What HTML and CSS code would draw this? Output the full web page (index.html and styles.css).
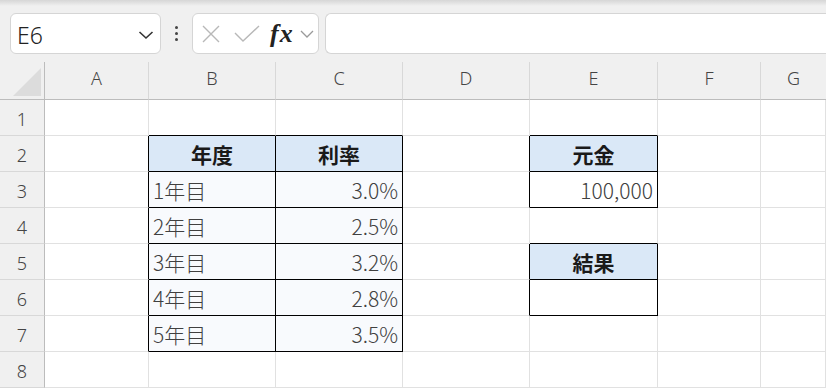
FILE: index.html
```html
<!DOCTYPE html>
<html lang="ja">
<head>
<meta charset="utf-8">
<link rel="stylesheet" href="styles.css">
</head>
<body>
<div class="topshade"></div>
<div class="toolbar">
  <div class="namebox">
    <span class="ref">E6</span>
    <svg class="nb-chev" width="16" height="10" viewBox="0 0 16 10"><path d="M1.5 2 L8 8 L14.5 2" fill="none" stroke="#333" stroke-width="1.6"/></svg>
  </div>
  <div class="dots"><i></i><i></i><i></i></div>
  <div class="fxbox">
    <svg width="20" height="20" viewBox="0 0 20 20"><path d="M2 2 L18 18 M18 2 L2 18" stroke="#b8b8b8" stroke-width="1.4" fill="none"/></svg>
    <svg width="26" height="18" viewBox="0 0 26 18"><path d="M1 8 L9 16 L25 1" stroke="#b8b8b8" stroke-width="1.4" fill="none"/></svg>
    <span class="fx">fx</span>
    <svg width="14" height="8" viewBox="0 0 14 8"><path d="M1 1 L7 7 L13 1" fill="none" stroke="#9a9a9a" stroke-width="1.3"/></svg>
  </div>
  <div class="formula"></div>
</div>
<div class="sheet">
  <div class="corner"><span class="tri"></span></div>
  <div class="ch">A</div><div class="ch">B</div><div class="ch">C</div><div class="ch">D</div><div class="ch">E</div><div class="ch">F</div><div class="ch last">G</div>

  <div class="rh">1</div>
  <div class="c"></div><div class="c bb"></div><div class="c bb"></div><div class="c"></div><div class="c bb"></div><div class="c"></div><div class="c"></div>

  <div class="rh">2</div>
  <div class="c rb"></div><div class="c hd rb bb">年度</div><div class="c hd rb bb">利率</div><div class="c rb"></div><div class="c hd rb bb">元金</div><div class="c"></div><div class="c"></div>

  <div class="rh">3</div>
  <div class="c rb"></div><div class="c dt rb bb">1年目</div><div class="c dt num rb bb">3.0%</div><div class="c rb"></div><div class="c num rb bb">100,000</div><div class="c"></div><div class="c"></div>

  <div class="rh">4</div>
  <div class="c rb"></div><div class="c dt rb bb">2年目</div><div class="c dt num rb bb">2.5%</div><div class="c"></div><div class="c bb"></div><div class="c"></div><div class="c"></div>

  <div class="rh">5</div>
  <div class="c rb"></div><div class="c dt rb bb">3年目</div><div class="c dt num rb bb">3.2%</div><div class="c rb"></div><div class="c hd rb bb">結果</div><div class="c"></div><div class="c"></div>

  <div class="rh">6</div>
  <div class="c rb"></div><div class="c dt rb bb">4年目</div><div class="c dt num rb bb">2.8%</div><div class="c rb"></div><div class="c rb bb"></div><div class="c"></div><div class="c"></div>

  <div class="rh">7</div>
  <div class="c rb"></div><div class="c dt rb bb">5年目</div><div class="c dt num rb bb">3.5%</div><div class="c"></div><div class="c"></div><div class="c"></div><div class="c"></div>

  <div class="rh">8</div>
  <div class="c"></div><div class="c"></div><div class="c"></div><div class="c"></div><div class="c"></div><div class="c"></div><div class="c"></div>
</div>
</body>
</html>
```
FILE: styles.css
```css
* { box-sizing: border-box; }
html, body { margin: 0; padding: 0; }
body {
  width: 826px;
  height: 388px;
  overflow: hidden;
  background: #f0f0f0;
  font-family: "Noto Sans", "Noto Sans CJK JP", sans-serif;
}
.topshade {
  height: 6px;
  background: linear-gradient(#d6d6d6, #f0f0f0);
  margin-bottom: -6px;
}
.toolbar {
  height: 62px;
  padding: 13px 0 0 10px;
  display: flex;
  align-items: flex-start;
}
.namebox {
  width: 151px;
  height: 41px;
  background: #fff;
  border: 1px solid #d5d5d5;
  border-radius: 6px;
  display: flex;
  align-items: center;
  justify-content: space-between;
  padding: 2px 6px 0 6px;
}
.ref {
  font-family: "Noto Sans", sans-serif;
  font-size: 23px;
  font-weight: 300;
  color: #222;
}
.nb-chev { margin-top: 0; }
.dots {
  width: 31px;
  height: 41px;
  display: flex;
  flex-direction: column;
  align-items: center;
  justify-content: center;
  gap: 3px;
}
.dots i {
  width: 3px;
  height: 3px;
  border-radius: 50%;
  background: #444;
  display: block;
}
.fxbox {
  width: 127px;
  height: 41px;
  background: #fff;
  border: 1px solid #d5d5d5;
  border-radius: 6px;
  display: flex;
  align-items: center;
  padding-left: 8px;
}
.fxbox svg:nth-child(1) { margin-right: 13px; }
.fxbox svg:nth-child(2) { margin-right: 10px; }
.fx {
  font-family: "Liberation Serif", "DejaVu Serif", serif;
  font-style: italic;
  font-weight: bold;
  font-size: 26px;
  line-height: 1;
  color: #222;
  margin-right: 6px;
  letter-spacing: 1px;
}
.formula {
  margin-left: 6px;
  flex: 1;
  height: 41px;
  background: #fff;
  border: 1px solid #d5d5d5;
  border-right: none;
  border-radius: 6px 0 0 6px;
}
.sheet {
  display: grid;
  grid-template-columns: 45px 104px 127px 127px 127px 128px 103px 1fr;
  grid-template-rows: 38px;
  grid-auto-rows: 36px;
  background: #fff;
}
.corner {
  background: #f0f0f0;
  border-right: 1px solid #bcbcbc;
  border-bottom: 1px solid #bcbcbc;
  position: relative;
}
.tri {
  position: absolute;
  left: 13px;
  top: 6px;
  width: 28px;
  height: 28px;
  background: #dcdcdc;
  clip-path: polygon(100% 0, 100% 100%, 0 100%);
}
.ch {
  background: #f0f0f0;
  border-right: 1px solid #d8d8d8;
  border-bottom: 1px solid #bcbcbc;
  display: flex;
  align-items: center;
  justify-content: center;
  font-size: 18px;
  font-weight: 300;
  color: #444;
  padding-bottom: 5px;
}
.ch.last { border-right: none; }
.rh {
  background: #f0f0f0;
  border-right: 1px solid #bcbcbc;
  border-bottom: 1px solid #d8d8d8;
  display: flex;
  align-items: center;
  justify-content: center;
  font-size: 18px;
  font-weight: 300;
  color: #444;
  padding-top: 2px;
}
.c {
  border-right: 1px solid #e1e1e1;
  border-bottom: 1px solid #e1e1e1;
  display: flex;
  align-items: center;
  padding: 1px 4px 0 4px;
  font-family: "Noto Sans CJK JP", sans-serif;
  font-size: 21px;
  font-weight: 300;
  color: #404040;
  white-space: nowrap;
}
.c.rb { border-right-color: #000; }
.c.bb { border-bottom-color: #000; }
.hd {
  background: #dae8f7;
  justify-content: center;
  font-weight: bold;
  color: #1a1a1a;
}
.dt { background: #f8fafd; }
.num { justify-content: flex-end; }
```
